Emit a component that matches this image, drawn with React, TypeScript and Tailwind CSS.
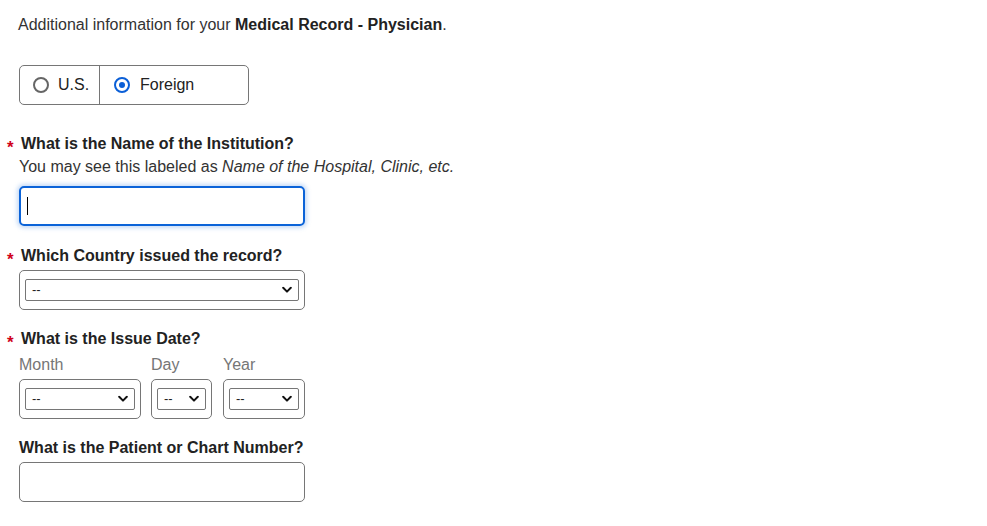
import type { ReactNode } from "react";

function Chevron() {
  return (
    <svg width="10" height="7" viewBox="0 0 10 7" className="absolute right-[6px] top-1/2 -translate-y-1/2 pointer-events-none">
      <path d="M1.2 1.3L5 5.1l3.8-3.8" fill="none" stroke="#111" strokeWidth="2" strokeLinecap="round" strokeLinejoin="round" />
    </svg>
  );
}

function SelectBox({ width }: { width: string }) {
  return (
    <div className={`${width} h-[40px] rounded-[5px] border border-[#767676] px-[5px] py-[8px]`}>
      <div className="relative h-full rounded-[2px] border border-[#767676] flex items-center pl-[6px] text-[13px] text-[#222]">
        --
        <Chevron />
      </div>
    </div>
  );
}

function Label({ children, required }: { children: ReactNode; required?: boolean }) {
  return (
    <div className={`relative leading-[22px] font-bold text-[16px] text-[#222] ${required ? "pl-[2px]" : ""}`}>
      {required && (
        <span className="absolute left-[-12px] top-[4px] text-[17px] font-bold leading-[22px] text-[#d0021b]">*</span>
      )}
      {children}
    </div>
  );
}

function Radio({ checked }: { checked?: boolean }) {
  return checked ? (
    <span className="w-[16px] h-[16px] rounded-full border-2 border-[#0b5fd7] flex items-center justify-center">
      <span className="w-[6px] h-[6px] rounded-full bg-[#0b5fd7]" />
    </span>
  ) : (
    <span className="w-[16px] h-[16px] rounded-full border-2 border-[#666]" />
  );
}

export default function App() {
  return (
    <div className="min-h-screen bg-white pl-[19px] pt-[13px] text-[16px] text-[#333]" style={{ fontFamily: '"Liberation Sans", Arial, sans-serif' }}>
      <p className="leading-[24px] -ml-px">
        Additional information for your <b className="text-[#222]">Medical Record - Physician</b>.
      </p>

      <div className="mt-[28px] flex w-[230px] h-[40px] rounded-[5px] border border-[#767676] text-[#222]">
        <label className="flex items-center gap-[9px] pl-[13px] w-[80px] border-r border-[#767676]">
          <Radio />
          <span>U.S.</span>
        </label>
        <label className="flex items-center gap-[10px] pl-[14px]">
          <Radio checked />
          <span>Foreign</span>
        </label>
      </div>

      <div className="mt-[28px]">
        <Label required>What is the Name of the Institution?</Label>
        <p className="mt-[1px] leading-[22px] text-[#333]">
          You may see this labeled as <i>Name of the Hospital, Clinic, etc.</i>
        </p>
        <div className="mt-[8px] w-[286px] h-[40px] rounded-[5px] border-2 border-[#0b63d8] shadow-[0_0_4px_2px_rgba(90,150,230,0.35)] flex items-center pl-[6px]">
          <span className="w-px h-[18px] bg-black" />
        </div>
      </div>

      <div className="mt-[19px]">
        <Label required>Which Country issued the record?</Label>
        <div className="mt-[3px]">
          <SelectBox width="w-[286px]" />
        </div>
      </div>

      <div className="mt-[18px]">
        <Label required>What is the Issue Date?</Label>
        <div className="mt-[4px] flex text-[#767676] leading-[22px]">
          <span className="w-[132px]">Month</span>
          <span className="w-[72px]">Day</span>
          <span>Year</span>
        </div>
        <div className="mt-[3px] flex">
          <SelectBox width="w-[122px]" />
          <div className="ml-[10px]">
            <SelectBox width="w-[61px]" />
          </div>
          <div className="ml-[11px]">
            <SelectBox width="w-[82px]" />
          </div>
        </div>
      </div>

      <div className="mt-[18px]">
        <Label>What is the Patient or Chart Number?</Label>
        <div className="mt-[3px] w-[286px] h-[40px] rounded-[5px] border border-[#767676]" />
      </div>
    </div>
  );
}
